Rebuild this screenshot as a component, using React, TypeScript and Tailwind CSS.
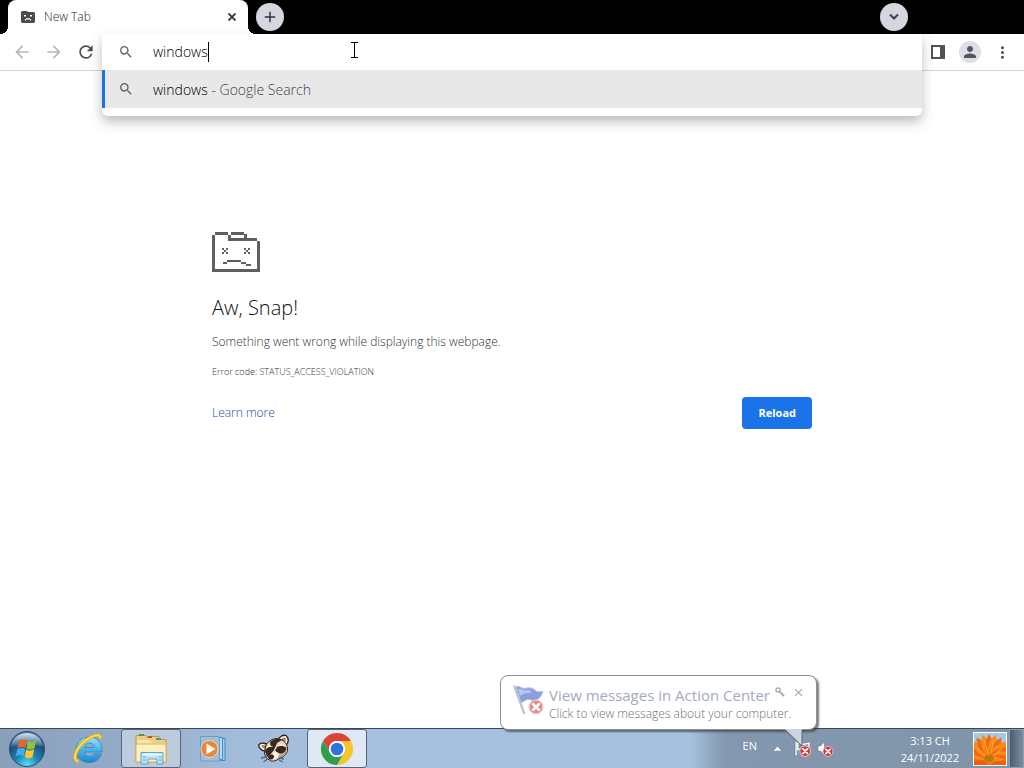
import React from "react";
import { MdArrowBack, MdArrowForward, MdRefresh, MdSearch, MdClose, MdAdd, MdMoreVert, MdPerson } from "react-icons/md";

function SadFolder() {
  return (
    <svg width="48" height="40" viewBox="0 0 48 40" shapeRendering="crispEdges" fill="#5f5f61" aria-hidden="true">
      <path d="M3 0h13v3H3zM0 3h3v37H0zM3 37h45v3H3zM45 9h3v28h-3zM16 6h29v3H16zM16 3h3v3h-3zM19 0h13v3H19zM32 2h3v4h-3z" />
      <path d="M10 16h2v2h-2zM14 16h2v2h-2zM12 18h2v2h-2zM10 20h2v2h-2zM14 20h2v2h-2z" />
      <path d="M32 16h2v2h-2zM36 16h2v2h-2zM34 18h2v2h-2zM32 20h2v2h-2zM36 20h2v2h-2z" />
      <path d="M11 30h4v2h-4zM15 28h14v2H15zM29 30h5v2h-5zM34 32h5v2h-5z" />
    </svg>
  );
}

function TabFavicon() {
  return (
    <svg width="14" height="12" viewBox="0 0 14 12" aria-hidden="true">
      <path fill="#4a4c50" d="M1 0h5l1 1h6l1 1v9l-1 1H1l-1-1V1z" />
      <path fill="#fff" d="M3 4h2v1.500H3zM9 4h2v1.500H9zM4 8h1V7.200h4V8h1v1.500H9V8.500H5v1H4z" />
    </svg>
  );
}

function StartOrb() {
  return (
    <svg width="38" height="38" viewBox="0 0 38 38" aria-hidden="true">
      <defs>
        <radialGradient id="orb" cx="50%" cy="95%" r="95%">
          <stop offset="0" stopColor="#5fe0f5" />
          <stop offset="0.35" stopColor="#1a86b4" />
          <stop offset="0.7" stopColor="#1c4f7c" />
          <stop offset="1" stopColor="#4f7da3" />
        </radialGradient>
        <linearGradient id="gloss" x1="0" y1="0" x2="0" y2="1">
          <stop offset="0" stopColor="#fff" stopOpacity="0.75" />
          <stop offset="1" stopColor="#fff" stopOpacity="0.1" />
        </linearGradient>
      </defs>
      <circle cx="19" cy="19" r="17.500" fill="url(#orb)" stroke="#2b4e70" />
      <path fill="url(#gloss)" d="M3 17C4 8 11 3 19 3s15 5 16 14c-6-3-24-3-32 0z" />
      <path fill="#e8642a" d="M11 11c3-2 5-2 8-.5L17.500 18c-3-1.500-5-1.500-8 0z" />
      <path fill="#8cc63f" d="M20 11c3 1.500 5 1.500 8-.5L26.500 18c-3 2-5 2-8 .5z" />
      <path fill="#4aa8ec" d="M9.200 19.200c3-1.500 5-1.500 8 0L15.700 26c-3-1.500-5-1.500-8 .5z" />
      <path fill="#fbc72b" d="M18.200 19.600c3 1.500 5 1.500 8-.5L24.600 27c-3 2-5 1.500-8-.2z" />
    </svg>
  );
}

function ExplorerE() {
  return (
    <svg width="34" height="34" viewBox="0 0 34 34" className="mr-[2px]" aria-hidden="true">
      <defs>
        <linearGradient id="ie" x1="0" y1="0" x2="0" y2="1">
          <stop offset="0" stopColor="#a5e2fb" />
          <stop offset="0.5" stopColor="#48b3ea" />
          <stop offset="1" stopColor="#2184cb" />
        </linearGradient>
      </defs>
      <path
        fill="url(#ie)"
        stroke="#2b87c4"
        strokeWidth="0.8"
        fillRule="evenodd"
        d="M18 5c7.500 0 13 5.500 13 13v2H13.500c.5 3 2.300 4.500 5 4.500 2 0 3.300-.8 4.200-2.500h7.600c-1.800 5.500-6 8.500-12 8.500C10.500 30.500 5 25.500 5 18S10.500 5 18 5zM13.500 15.500h9.700c-.5-3-2.200-4.500-4.800-4.500s-4.400 1.500-4.900 4.500z"
      />
      <path
        fill="none"
        stroke="#d99a10"
        strokeWidth="3.400"
        strokeLinecap="round"
        d="M6.500 29.500C.5 27 6 14 16 7.500 22 3 29 1.500 29.500 5.500"
      />
      <path
        fill="none"
        stroke="#fbdc3c"
        strokeWidth="2.400"
        strokeLinecap="round"
        d="M6.500 29.500C.5 27 6 14 16 7.500 22 3 29 1.500 29.500 5.500"
      />
    </svg>
  );
}

function FileExplorer() {
  return (
    <svg width="36" height="34" viewBox="0 0 36 34" aria-hidden="true">
      <path fill="#ecd080" stroke="#c39a3c" d="M3 3.500h10l1 2h4v-1h8l1 3h6V30H3z" />
      <path fill="#f7e6a8" d="M4 8h13l2 3h14v18H4z" />
      <path fill="#fbf0c0" stroke="#d6b45c" d="M3 12h30v18H3z" />
      <path fill="#4c9a3c" d="M6 2h5v2H6z" />
      <path fill="#d8432f" d="M15 4h4v2h-4z" />
      <path fill="#3a92d0" d="M23 6h5v2h-5z" />
      <path fill="#bfe3f5" stroke="#5ba4cc" d="M8 20.500h22V32h-6v-5h-9v5H8z" />
      <path fill="#e9f8fe" d="M9 21.500h20v2H9z" />
      <path stroke="#4bacd9" strokeWidth="1" d="M10 25h3M10 28h3M26 25h3M26 28h3" />
    </svg>
  );
}

function MediaPlayer() {
  return (
    <svg width="28" height="28" viewBox="0 0 28 28" aria-hidden="true">
      <path fill="#9ccdec" stroke="#3b8fc4" d="M8 3.500h18v22H8z" />
      <path fill="#b8dcf2" stroke="#3b8fc4" d="M5 2.500h18.500v22H5z" />
      <path fill="#9dbfdf" stroke="#6d9bc2" d="M1.500 1.500h19V26h-19z" />
      <circle cx="10.500" cy="14" r="8.500" fill="#ee8436" stroke="#fbd3ab" />
      <path fill="#fff" d="M7.500 8.500v11l9-5.500z" />
    </svg>
  );
}

function Raccoon() {
  return (
    <svg width="34" height="30" viewBox="0 0 34 30" aria-hidden="true">
      <path fill="#f4e9dc" stroke="#2e211b" strokeWidth="1.300" d="M7 17C3 17 0 13 1 10.500 3 8.500 8 9 10 11zM20 6c1-3 5-5.500 8-4.500 3 3 2.500 7 0 10z" />
      <path fill="#a97a5a" d="M7 15c-2-1-3.500-3-3.500-4L8 11.500zM23 6c1-1.500 3-2.500 4.500-2 .5 2 0 4-1.500 6z" />
      <path fill="#ecd5b8" stroke="#2e211b" strokeWidth="1" d="M8 11C11 6 17 3.500 22 5c5 2 8 6 7.500 11-.5 4-4 7-9 9-3 2-7 3-9 1-3-1-5-4-5-8z" />
      <path fill="#38271f" d="M12 8c3-3 8-4.500 12-2l-5 3-3 7-3-2zM7 17c1-3 4-5 7-4l2 3-4 5-3 2zM19 13c2-2.500 6-2 9.500 1-.5 4-4 6.500-7 5.500L17 17z" />
      <path fill="#fbf5ec" d="M9 12.500c2-1.500 4-1.500 6 .5-3-.5-5 0-7 2zM19.500 12.500c2-3 6-2.500 8-.5-3-.5-5 0-8 .5zM14 21l3-4 5 4-2 3-6 1z" />
      <path fill="#38271f" d="M10.500 21.500c2-1.500 5-1.500 5.500.5s-2 4-4 3.500-2.500-3-1.500-4z" />
      <path fill="#c59a72" d="M21 21c2 0 5-1.500 7-4-1 4-4 6-9 8z" />
      <path stroke="#41699a" strokeWidth="1.300" fill="none" d="M9 23l-6 1M9.500 25l-4 3M22 24l4 1M21 26l4 2" />
    </svg>
  );
}

function ChromeLogo() {
  return (
    <svg width="32" height="32" viewBox="0 0 48 48" aria-hidden="true">
      <path fill="#db4437" d="M3.215 12A24 24 0 0 1 44.785 12H24A12 12 0 0 0 13.608 30z" />
      <path fill="#f9c52c" d="M44.785 12A24 24 0 0 1 24 48l10.392-18A12 12 0 0 0 24 12z" />
      <path fill="#2f9e4f" d="M24 48A24 24 0 0 1 3.215 12l10.393 18A12 12 0 0 0 34.392 30z" />
      <circle cx="24" cy="24" r="12" fill="#fff" />
      <circle cx="24" cy="24" r="9.500" fill="#2f72e0" />
    </svg>
  );
}

function ErrorBadge({ x, y, r }: { x: number; y: number; r: number }) {
  const d = r * 0.42;
  return (
    <g>
      <circle cx={x} cy={y} r={r} fill="#d3323a" stroke="#f0b9ba" strokeWidth="1" />
      <path
        d={`M${x - d} ${y - d}L${x + d} ${y + d}M${x + d} ${y - d}L${x - d} ${y + d}`}
        stroke="#fff"
        strokeWidth={r * 0.36}
        strokeLinecap="round"
      />
    </g>
  );
}

function TrayFlag() {
  return (
    <svg width="17" height="17" viewBox="0 0 16 16" aria-hidden="true">
      <path fill="#fff" stroke="#56677b" strokeWidth="0.500" d="M1 1h2v14H1z" />
      <path fill="#7f90a4" stroke="#fff" strokeWidth="1.200" d="M3.500 3c3-1 3.500 1 5.500 1s3 0 5-1v6c-3 1-4 0-6 0s-3-1-4.500 0z" />
      <ErrorBadge x={10.5} y={10.5} r={5} />
    </svg>
  );
}

function TraySpeaker() {
  return (
    <svg width="17" height="16" viewBox="0 0 17 16" aria-hidden="true">
      <path fill="#fff" stroke="#5b6b7d" strokeWidth="0.500" d="M1 5h2.500L7.500 1v13l-4-4H1z" />
      <ErrorBadge x={11} y={10.5} r={5} />
    </svg>
  );
}

function BalloonFlag() {
  return (
    <svg width="34" height="32" viewBox="0 0 34 32" className="opacity-55" aria-hidden="true">
      <path stroke="#8b96a8" strokeWidth="2.400" strokeLinecap="round" d="M2.500 2.500L12 29" />
      <path fill="#2c50bd" stroke="#7b93d2" d="M4 3c4-2 6 3 11 1 4-1 7 1 9 3 2 1 5 1 7 0-1 4-3 7-6 9-5 2-7-2-11 0l-5 3z" />
      <path fill="#7c9af0" d="M6 5c4-1 6 3 10 1 2 0 3 1 4 2-4 2-7 0-12 4z" />
      <ErrorBadge x={24} y={23} r={7} />
    </svg>
  );
}

const petals = Array.from({ length: 15 }, (_, i) => -112 + i * 16);

function FlowerPicture() {
  return (
    <svg width="34" height="34" viewBox="0 0 34 34" className="border border-white" aria-hidden="true">
      <path fill="#f7790c" d="M0 0h34v34H0z" />
      <path fill="#a3cbe2" d="M0 0h34v9l-8 5-9-4-9 4-8-5z" />
      {petals.map((a, i) => (
        <path
          key={a}
          d="M16 27C10 19 11 8 16 1c5 7 6 18 0 26z"
          fill={i % 2 ? "#f4690f" : "#fb8c1a"}
          transform={`rotate(${a} 16 26)`}
        />
      ))}
      <path stroke="#ffb53f" strokeWidth="1" fill="none" d="M15 22L11 8M18 21l3-13M12 24L3 16M21 24l9-8" />
      <ellipse cx="16" cy="27" rx="5" ry="3.500" fill="#b8780c" />
      <path fill="#f25c0a" d="M0 30l11-1 4 5H0zM21 30l13-1v5H17z" />
    </svg>
  );
}

const taskButtons = [
  { label: "Internet Explorer", icon: <ExplorerE />, open: false },
  { label: "File Explorer", icon: <FileExplorer />, open: true },
  { label: "Media Player", icon: <MediaPlayer />, open: false },
  { label: "Raccoon", icon: <Raccoon />, open: false },
  { label: "Chrome", icon: <ChromeLogo />, open: true, active: true },
];

function TabStrip() {
  return (
    <header className="flex h-[34px] items-end bg-black pl-2">
      <div className="relative flex h-[34px] w-60 items-center rounded-t-lg bg-white pr-2 pl-[13px]">
        <span className="absolute bottom-0 -left-2 size-2 bg-[radial-gradient(circle_at_0_0,transparent_8px,white_8px)]" />
        <span className="absolute -right-2 bottom-0 size-2 bg-[radial-gradient(circle_at_100%_0,transparent_8px,white_8px)]" />
        <TabFavicon />
        <span className="ml-[9px] flex-1 text-[12px] font-light text-[#202224]">New Tab</span>
        <button aria-label="Close tab" className="grid size-4 place-items-center text-[#2f3135]">
          <svg width="8" height="8" viewBox="0 0 8 8" stroke="currentColor" strokeWidth="1.800" aria-hidden="true">
            <path d="M0.500 0.500l7 7M7.500 0.500l-7 7" />
          </svg>
        </button>
      </div>
      <button aria-label="New tab" className="mb-[3px] ml-2 grid size-7 place-items-center rounded-full bg-[#d5d7de] text-[#303440]">
        <MdAdd size={18} />
      </button>
      <button aria-label="Search tabs" className="mr-[116px] mb-[3px] ml-auto grid size-7 place-items-center rounded-full bg-[#d5d7de]">
        <svg width="12" height="8" viewBox="0 0 12 8" fill="none" stroke="#3c4150" strokeWidth="2" aria-hidden="true">
          <path d="M2 1.500l4 4 4-4" />
        </svg>
      </button>
    </header>
  );
}

function Omnibox() {
  return (
    <div className="relative h-9 flex-1">
      <div className="absolute inset-x-0 top-0 z-10 rounded-b-md bg-white shadow-[0_6px_12px_rgba(60,70,70,0.35)]">
        <label className="flex h-9 items-center pl-4">
          <MdSearch size={16} className="text-[#5f6368]" />
          <input
            aria-label="Address and search bar"
            defaultValue="windows"
            className="ml-[19px] field-sizing-content bg-transparent text-[14px] leading-5 font-light text-black outline-none"
          />
          <span className="h-5 w-px bg-black" />
        </label>
        <a href="#search" className="flex h-[38px] items-center border-l-[3px] border-[#1a73e8] bg-[#e8e8e8] pl-[13px] text-[14px] font-light text-black">
          <MdSearch size={16} className="text-[#5f6368]" />
          <span className="ml-[19px]">
            windows <span className="text-[#404346]">- Google Search</span>
          </span>
        </a>
        <div className="h-2" />
        {/* text cursor */}
        <svg width="7" height="16" viewBox="0 0 7 16" className="absolute top-2 left-[249px]" shapeRendering="crispEdges" aria-hidden="true">
          <path d="M0 0h7v1H0zM3 1h1v14H3zM0 15h7v1H0z" />
        </svg>
      </div>
    </div>
  );
}

function Toolbar() {
  return (
    <div className="flex h-[37px] border-b border-[#d4d5d7] bg-white">
      <nav className="flex w-[102px] items-center gap-3 pl-3 text-[#b5b7ba]">
        <button aria-label="Back"><MdArrowBack size={20} /></button>
        <button aria-label="Forward"><MdArrowForward size={20} /></button>
        <button aria-label="Reload page" className="text-[#4b4e52]"><MdRefresh size={20} /></button>
      </nav>
      <Omnibox />
      <div className="flex w-[102px] items-center pl-2 text-[#4f5358]">
        <button aria-label="Side panel">
          <svg width="16" height="14" viewBox="0 0 16 14" aria-hidden="true">
            <path fill="currentColor" fillRule="evenodd" d="M1 0h14v14H1zM3 2v10h7V2z" />
          </svg>
        </button>
        <button aria-label="Profile" className="ml-[13px] grid size-[22px] place-items-center rounded-full bg-[#dcdfe4] text-[#4d5566]">
          <MdPerson size={18} />
        </button>
        <button aria-label="Menu" className="ml-3"><MdMoreVert size={19} /></button>
      </div>
    </div>
  );
}

function CrashPage() {
  return (
    <main className="flex-1 bg-white">
      <div className="mx-auto max-w-[600px] pt-[161px] text-[#303133]">
        <SadFolder />
        <h1 className="mt-5 text-[20px] leading-8 font-light text-[#101112]">Aw, Snap!</h1>
        <p className="mt-2 text-[12px] leading-5 font-light">Something went wrong while displaying this webpage.</p>
        <p className="mt-3 text-[9px] leading-4 font-light">Error code: STATUS_ACCESS_VIOLATION</p>
        <div className="mt-[17px] flex items-center justify-between">
          <a href="#help" className="text-[12px] font-light text-[#0e47a8]">Learn more</a>
          <button className="h-8 rounded bg-[#1a73e8] px-4 text-[11px] font-bold text-white">Reload</button>
        </div>
      </div>
    </main>
  );
}

function Balloon() {
  return (
    <div className="absolute right-[207px] bottom-[38px] flex h-[55px] w-[317px] rounded-lg border border-[#8d9095] bg-white pt-2 pl-[11px] shadow-[2px_2px_2px_rgba(50,55,60,0.65)]">
      <BalloonFlag />
      <div className="ml-[3px] whitespace-nowrap">
        <h2 className="text-[15px] leading-[22px] text-[#a3abba]">View messages in Action Center</h2>
        <p className="text-[12px] leading-4 font-light text-[#707074]">Click to view messages about your computer.</p>
      </div>
      <button aria-label="Options" className="absolute top-[11px] right-[31px]">
        <svg width="10" height="10" viewBox="0 0 10 10" fill="none" stroke="#adafb4" aria-hidden="true">
          <circle cx="3" cy="3" r="2" strokeWidth="1.500" />
          <path d="M4.500 4.500L9 9" strokeWidth="2" />
        </svg>
      </button>
      <button aria-label="Close" className="absolute top-[10px] right-[11px] text-[#a5a5a8]">
        <MdClose size={13} />
      </button>
      <svg width="19" height="18" viewBox="0 0 19 18" className="absolute top-[53px] right-[13px]" aria-hidden="true">
        <path fill="#ccd4de" d="M1 0h17v17z" />
        <path fill="none" stroke="#5b6878" d="M1 1l17 16V1" />
      </svg>
    </div>
  );
}

function Taskbar() {
  return (
    <footer className="relative flex h-10 border-t border-[#33475f] bg-[linear-gradient(90deg,#899fba_0px,#94abc7_120px,#a2bcd9_240px,#a6c1df_400px,#a6c1df_690px,#8397ae_725px,#8094aa_100%)]">
      <button aria-label="Start" className="grid w-[54px] place-items-center"><StartOrb /></button>
      <div className="ml-[5px] flex gap-[2px]">
        {taskButtons.map((b) => (
          <button
            key={b.label}
            aria-label={b.label}
            className={`grid w-[60px] place-items-center rounded-[3px] border ${
              b.active ? "border-[#52657c] bg-[#dfe8f3]" : b.open ? "border-[#52657c] bg-[#bdcbdd]" : "border-transparent"
            }`}
          >
            {b.icon}
          </button>
        ))}
      </div>
      <div className="ml-auto flex items-center text-[11px] text-white">
        <span className="mb-1">EN</span>
        <button aria-label="Show hidden icons" className="ml-4">
          <svg width="9" height="5" viewBox="0 0 9 5" aria-hidden="true">
            <path fill="#fff" stroke="#56677b" strokeWidth="0.500" d="M0 5l4.500-5L9 5z" />
          </svg>
        </button>
        <button aria-label="Action Center" className="ml-3"><TrayFlag /></button>
        <button aria-label="Volume" className="ml-[6px]"><TraySpeaker /></button>
        <time className="ml-[63px] w-[66px] text-center leading-[17px]">
          3:13 CH
          <br />
          24/11/2022
        </time>
        <span className="ml-[10px]"><FlowerPicture /></span>
        <button aria-label="Show desktop" className="ml-[2px] w-[15px] self-stretch border border-[#8d9fb2] bg-gradient-to-r from-[#4d5d6e] to-[#7d8ea1]" />
      </div>
      <Balloon />
    </footer>
  );
}

export default function App() {
  return (
    <div className="flex min-h-screen flex-col bg-white font-['Open_Sans','Noto_Sans',sans-serif]">
      <TabStrip />
      <Toolbar />
      <CrashPage />
      <Taskbar />
    </div>
  );
}
